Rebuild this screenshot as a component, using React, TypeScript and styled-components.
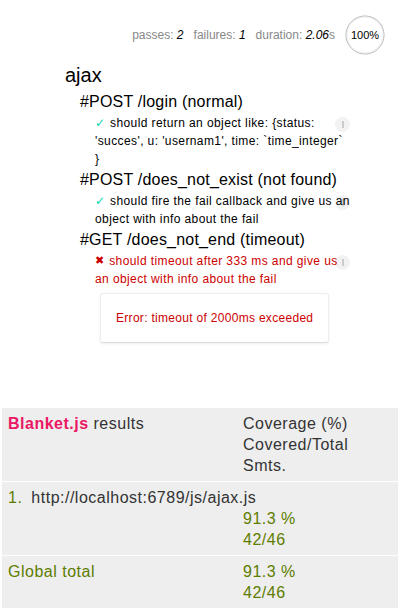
import { createGlobalStyle, styled } from "styled-components";

const GlobalStyle = createGlobalStyle`
  html, body {
    margin: 0;
    padding: 0;
    background: #fff;
  }
  body {
    font-family: "Liberation Sans", Arial, sans-serif;
    color: #000;
  }
`;

const Stats = styled.ul`
  display: flex;
  justify-content: flex-end;
  align-items: flex-start;
  height: 60px;
  box-sizing: border-box;
  margin: 0;
  padding: 15px 10px 0;
  list-style: none;
  font-size: 12px;
  color: #888;
`;

const Stat = styled.li`
  margin: 0 5px;
  padding-top: 11px;
  line-height: 18px;
  & em {
    color: #000;
  }
`;

const Progress = styled.li`
  margin: 0 5px;
  width: 40px;
  height: 40px;
  & svg {
    display: block;
  }
`;

const Report = styled.ul`
  margin: 0 50px 60px;
  padding: 0;
  list-style: none;
`;

const Suite = styled.li`
  margin-left: 15px;
`;

const SuiteTitle = styled.h1<{ $nested?: boolean }>`
  margin: 0;
  font-size: ${(p) => (p.$nested ? "16px" : "20px")};
  font-weight: normal;
  line-height: 1.5;
  letter-spacing: ${(p) => (p.$nested ? "0.2px" : "0")};
`;

const List = styled.ul`
  margin: 0;
  padding: 0;
  list-style: none;
`;

const Test = styled.li<{ $fail?: boolean }>`
  margin-left: 15px;
  overflow: hidden;
  color: ${(p) => (p.$fail ? "#c00" : "#000")};
`;

const TestTitle = styled.h2`
  position: relative;
  margin: 0;
  font-size: 12px;
  font-weight: normal;
  line-height: 18px;
  letter-spacing: 0.4px;
`;

const Mark = styled.span<{ $fail?: boolean }>`
  float: left;
  margin-right: 5px;
  font-family: "DejaVu Sans", sans-serif;
  font-size: ${(p) => (p.$fail ? "11px" : "12px")};
  letter-spacing: 0;
  color: ${(p) => (p.$fail ? "#c00" : "#00d6b2")};
`;

const Replay = styled.a`
  position: absolute;
  top: 3px;
  right: 0;
  width: 15px;
  height: 15px;
  border-radius: 50%;
  background: rgba(0, 0, 0, 0.05);
  display: flex;
  align-items: center;
  justify-content: center;
  &::before {
    content: "";
    width: 2px;
    height: 7px;
    background: rgba(0, 0, 0, 0.16);
  }
`;

const ErrorBox = styled.pre`
  float: left;
  clear: left;
  margin: 5px;
  padding: 15px;
  border: 1px solid #eee;
  border-bottom-color: #ddd;
  border-radius: 3px;
  box-shadow: 0 1px 3px #eee;
  font: 12px/18px "Liberation Sans", Arial, sans-serif;
  letter-spacing: 0.3px;
  color: #c00;
  white-space: pre-wrap;
`;

const Blanket = styled.div`
  margin: 2px;
  background: #eee;
  color: #333;
  font-size: 16px;
  line-height: 21px;
  letter-spacing: 0.5px;
`;

const Row = styled.div`
  display: grid;
  grid-template-columns: 235px 150px;
  padding: 5px 6px;
  border-bottom: 1px solid #fff;
  &:last-child {
    border-bottom: none;
  }
`;

const Cell = styled.div<{ $ok?: boolean; $wide?: boolean; $col2?: boolean }>`
  color: ${(p) => (p.$ok ? "#5e7d00" : "#333")};
  ${(p) => p.$wide && "grid-column: 1 / -1;"}
  ${(p) => p.$col2 && "grid-column: 2;"}
`;

const Logo = styled.a`
  color: #eb1764;
  font-weight: bold;
  text-decoration: none;
`;

const Num = styled.span`
  color: #5e7d00;
  margin-right: 9px;
`;

const tests = [
  {
    suite: "#POST /login (normal)",
    title:
      "should return an object like: {status: 'succes', u: 'usernam1', time: `time_integer` }",
  },
  {
    suite: "#POST /does_not_exist (not found)",
    title: "should fire the fail callback and give us an object with info about the fail",
  },
  {
    suite: "#GET /does_not_end (timeout)",
    title: "should timeout after 333 ms and give us an object with info about the fail",
    error: "Error: timeout of 2000ms exceeded",
  },
];

const App = () => {
  return (
    <>
      <GlobalStyle />
      <Stats>
        <Stat>
          passes: <em>2</em>
        </Stat>
        <Stat>
          failures: <em>1</em>
        </Stat>
        <Stat>
          duration: <em>2.06</em>s
        </Stat>
        <Progress>
          <svg width="40" height="40" viewBox="0 0 40 40">
            <circle cx="20" cy="20" r="19" fill="none" stroke="#b5b5b5" strokeWidth="1" />
            <circle cx="20" cy="20" r="18" fill="none" stroke="#eee" strokeWidth="1" />
            <text
              x="20"
              y="24"
              textAnchor="middle"
              fontSize="11"
              fontFamily="Liberation Sans, Arial, sans-serif"
              fill="#000"
            >
              100%
            </text>
          </svg>
        </Progress>
      </Stats>

      <Report>
        <Suite>
          <SuiteTitle>ajax</SuiteTitle>
          <List>
            {tests.map((t) => (
              <Suite key={t.suite}>
                <SuiteTitle $nested>{t.suite}</SuiteTitle>
                <List>
                  <Test $fail={!!t.error}>
                    <TestTitle>
                      <Mark $fail={!!t.error}>{t.error ? "✖" : "✓"}</Mark>
                      {t.title}
                      <Replay />
                    </TestTitle>
                    {t.error && <ErrorBox>{t.error}</ErrorBox>}
                  </Test>
                </List>
              </Suite>
            ))}
          </List>
        </Suite>
      </Report>

      <Blanket>
        <Row>
          <Cell>
            <Logo>Blanket.js</Logo> results
          </Cell>
          <Cell>
            Coverage (%)
            <br />
            Covered/Total
            <br />
            Smts.
          </Cell>
        </Row>
        <Row>
          <Cell $wide>
            <Num>1.</Num>http://localhost:6789/js/ajax.js
          </Cell>
          <Cell $ok $col2>
            91.3 %
            <br />
            42/46
          </Cell>
        </Row>
        <Row>
          <Cell $ok>Global total</Cell>
          <Cell $ok>
            91.3 %
            <br />
            42/46
          </Cell>
        </Row>
      </Blanket>
    </>
  );
};

export default App;
